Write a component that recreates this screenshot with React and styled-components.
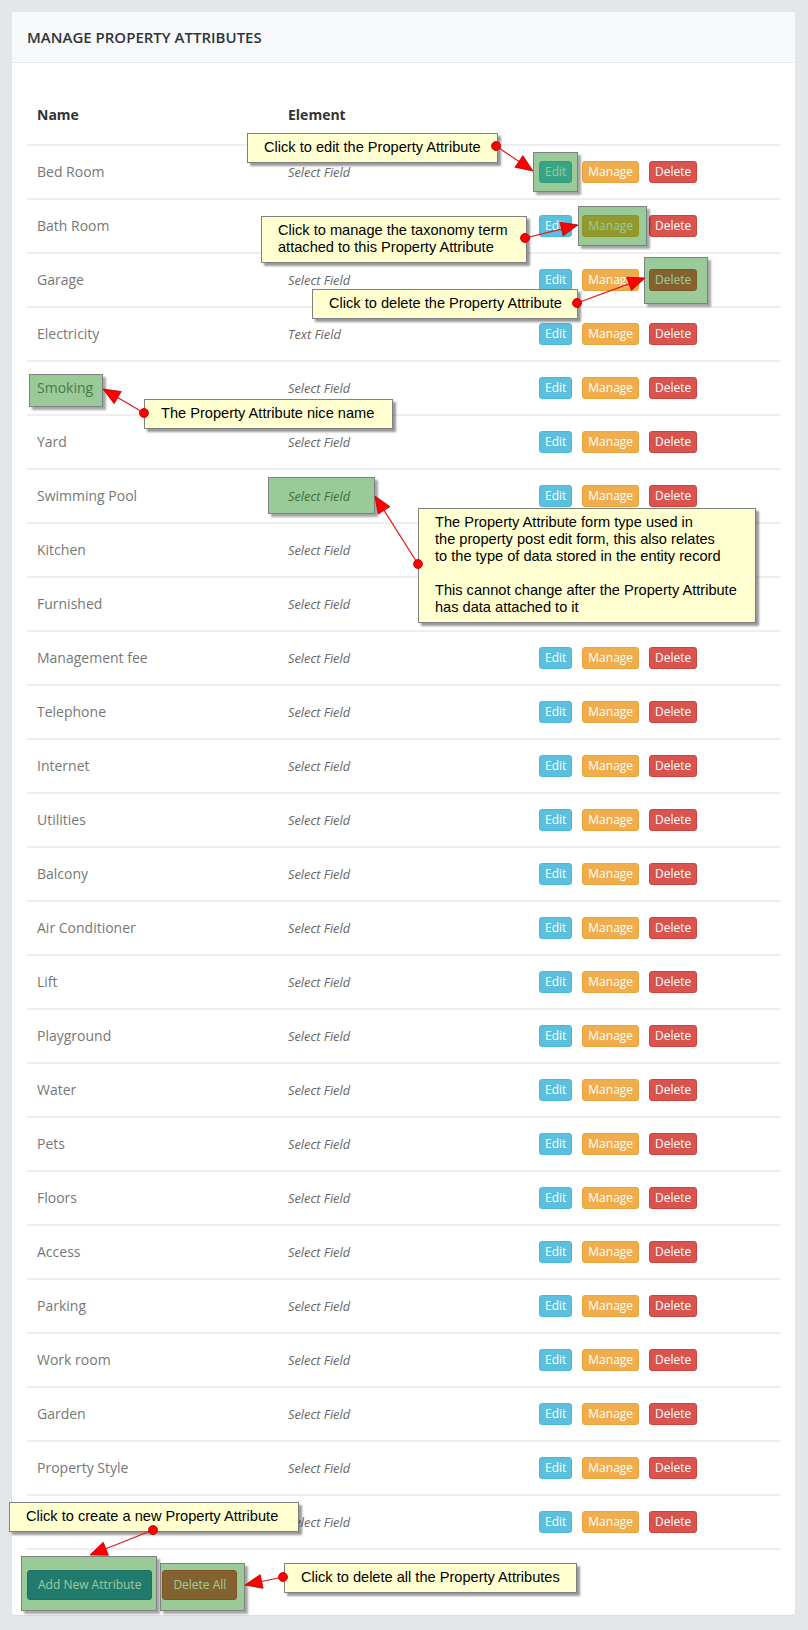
import React from "react";
import styled, { createGlobalStyle } from "styled-components";

const GlobalStyle = createGlobalStyle`
  html, body { margin: 0; padding: 0; background: #e4e7ea; }
  body { font-family: "Open Sans", "Liberation Sans", sans-serif; }
  * { box-sizing: border-box; }
`;

const Page = styled.div`
  position: relative;
  width: 808px;
  min-height: 1630px;
  padding: 12px 13px 15px 12px;
`;

const Panel = styled.section`
  background: #ffffff;
  border-radius: 3px;
  box-shadow: 0 1px 1px rgba(0, 0, 0, 0.04);
  overflow: hidden;
`;

const PanelHeader = styled.header`
  background: #f8f9fa;
  border-bottom: 1px solid #e7eaec;
  padding: 15px;
  height: 51px;
  display: flex;
  align-items: center;
`;

const Title = styled.h2`
  margin: 0;
  font-size: 15px;
  font-weight: 600;
  color: #2f353b;
  text-transform: uppercase;
  line-height: 21px;
`;

const PanelBody = styled.div`
  padding: 30px 15px 15px;
`;

const Row = styled.div`
  display: grid;
  grid-template-columns: repeat(3, 1fr);
  align-items: center;
  border-top: ${(p) => (p.$head ? "none" : "2px solid #eeeeee")};
  padding: ${(p) => (p.$head ? "12px 0 19px" : "15px 0")};
  &:last-child {
    border-bottom: 2px solid #eeeeee;
  }
`;

const HeadCell = styled.div`
  padding: 0 10px;
  font-size: 14px;
  font-weight: 700;
  color: #333;
  line-height: 20px;
`;

const NameCell = styled.div`
  padding: 0 10px;
  font-size: 14px;
  color: #777;
  line-height: 22px;
`;

const TypeCell = styled.div`
  padding: 0 10px;
  font-size: 12.8px;
  font-style: italic;
  color: #666;
  line-height: 22px;
`;

const Actions = styled.div`
  padding: 0 10px;
  display: flex;
  gap: 10px;
`;

const palette = {
  info: ["#5bc0de", "#46b8da"],
  warning: ["#f0ad4e", "#eea236"],
  danger: ["#d9534f", "#d43f3a"],
  primary: ["#337ab7", "#2e6da4"],
};

const Button = styled.button`
  font-family: "Open Sans", "Liberation Sans", sans-serif;
  font-size: 12px;
  line-height: 18px;
  padding: ${(p) => (p.$size === "sm" ? "5px 10px" : "1px 5px")};
  border-radius: 3px;
  color: #fff;
  background: ${(p) => palette[p.$variant][0]};
  border: 1px solid ${(p) => palette[p.$variant][1]};
  cursor: pointer;
`;

const Footer = styled.div`
  display: flex;
  gap: 10px;
  margin-top: 20px;
`;

const Overlay = styled.div`
  position: absolute;
  inset: 0;
  pointer-events: none;
`;

const Highlight = styled.div`
  position: absolute;
  background: rgba(5, 122, 0, 0.4);
  border: 1px solid #808080;
  box-shadow: 3px 3px 2px rgba(0, 0, 0, 0.35);
`;

const Callout = styled.div`
  position: absolute;
  background: #ffffcf;
  border: 1px solid #808080;
  box-shadow: 3px 3px 2px rgba(0, 0, 0, 0.4);
  padding: 5px 8px 6px 16px;
  font-family: "Liberation Sans", Arial, sans-serif;
  font-size: 14.6px;
  line-height: 17px;
  color: #000;
  white-space: pre-line;
`;

const ArrowLayer = styled.svg`
  position: absolute;
  left: 0;
  top: 0;
`;

function Arrow({ from, to }) {
  const [x1, y1] = from;
  const [x2, y2] = to;
  const dx = x2 - x1;
  const dy = y2 - y1;
  const len = Math.hypot(dx, dy);
  const ux = dx / len;
  const uy = dy / len;
  const L = 17;
  const W = 7;
  const bx = x2 - ux * L;
  const by = y2 - uy * L;
  const nx = -uy;
  const ny = ux;
  const pts = `${x2},${y2} ${bx + nx * W},${by + ny * W} ${bx - nx * W},${by - ny * W}`;
  return (
    <g>
      <line x1={x1} y1={y1} x2={bx} y2={by} stroke="#e8151b" strokeWidth="1.2" />
      <polygon points={pts} fill="#ff0000" stroke="#b00000" strokeWidth="0.8" />
      <circle cx={x1} cy={y1} r="4.5" fill="#ff0000" stroke="#b00000" strokeWidth="0.8" />
    </g>
  );
}

const rows = [
  ["Bed Room", "Select Field"],
  ["Bath Room", "Select Field"],
  ["Garage", "Select Field"],
  ["Electricity", "Text Field"],
  ["Smoking", "Select Field"],
  ["Yard", "Select Field"],
  ["Swimming Pool", "Select Field"],
  ["Kitchen", "Select Field"],
  ["Furnished", "Select Field"],
  ["Management fee", "Select Field"],
  ["Telephone", "Select Field"],
  ["Internet", "Select Field"],
  ["Utilities", "Select Field"],
  ["Balcony", "Select Field"],
  ["Air Conditioner", "Select Field"],
  ["Lift", "Select Field"],
  ["Playground", "Select Field"],
  ["Water", "Select Field"],
  ["Pets", "Select Field"],
  ["Floors", "Select Field"],
  ["Access", "Select Field"],
  ["Parking", "Select Field"],
  ["Work room", "Select Field"],
  ["Garden", "Select Field"],
  ["Property Style", "Select Field"],
  ["Security", "Select Field"],
];

const highlights = [
  { l: 533, t: 152, w: 45, h: 40 },
  { l: 578, t: 206, w: 69, h: 40 },
  { l: 644, t: 257, w: 64, h: 47 },
  { l: 29, t: 374, w: 74, h: 33 },
  { l: 268, t: 477, w: 107, h: 37 },
  { l: 21, t: 1556, w: 136, h: 55 },
  { l: 160, t: 1563, w: 85, h: 48 },
];

const callouts = [
  { l: 247, t: 133, w: 251, text: "Click to edit the Property Attribute" },
  { l: 261, t: 216, w: 266, text: "Click to manage the taxonomy term\nattached to this Property Attribute" },
  { l: 312, t: 289, w: 266, text: "Click to delete the Property Attribute" },
  { l: 144, t: 399, w: 249, text: "The Property Attribute nice name" },
  {
    l: 418,
    t: 508,
    w: 338,
    text:
      "The Property Attribute form type used in\nthe property post edit form, this also relates\nto the type of data stored in the entity record\n\nThis cannot change after the Property Attribute\nhas data attached to it",
  },
  { l: 9, t: 1502, w: 290, text: "Click to create a new Property Attribute" },
  { l: 284, t: 1563, w: 293, text: "Click to delete all the Property Attributes" },
];

const arrows = [
  { from: [496, 146], to: [533, 171] },
  { from: [525, 238], to: [578, 225] },
  { from: [577, 303], to: [645, 278] },
  { from: [144, 413], to: [103, 389] },
  { from: [418, 564], to: [375, 496] },
  { from: [153, 1530], to: [90, 1555] },
  { from: [283, 1577], to: [245, 1585] },
];

export default function App() {
  return (
    <>
      <GlobalStyle />
      <Page>
        <Panel>
          <PanelHeader>
            <Title>Manage Property Attributes</Title>
          </PanelHeader>
          <PanelBody>
            <div>
              <Row $head>
                <HeadCell>Name</HeadCell>
                <HeadCell>Element</HeadCell>
                <HeadCell />
              </Row>
              {rows.map(([name, type]) => (
                <Row key={name}>
                  <NameCell>{name}</NameCell>
                  <TypeCell>{type}</TypeCell>
                  <Actions>
                    <Button $variant="info">Edit</Button>
                    <Button $variant="warning">Manage</Button>
                    <Button $variant="danger">Delete</Button>
                  </Actions>
                </Row>
              ))}
            </div>
            <Footer>
              <Button $variant="primary" $size="sm">Add New Attribute</Button>
              <Button $variant="danger" $size="sm">Delete All</Button>
            </Footer>
          </PanelBody>
        </Panel>
        <Overlay>
          {highlights.map((h, i) => (
            <Highlight key={i} style={{ left: h.l, top: h.t, width: h.w, height: h.h }} />
          ))}
          {callouts.map((c, i) => (
            <Callout key={i} style={{ left: c.l, top: c.t, width: c.w }}>
              {c.text}
            </Callout>
          ))}
          <ArrowLayer width="808" height="1630" viewBox="0 0 808 1630">
            {arrows.map((a, i) => (
              <Arrow key={i} from={a.from} to={a.to} />
            ))}
          </ArrowLayer>
        </Overlay>
      </Page>
    </>
  );
}
